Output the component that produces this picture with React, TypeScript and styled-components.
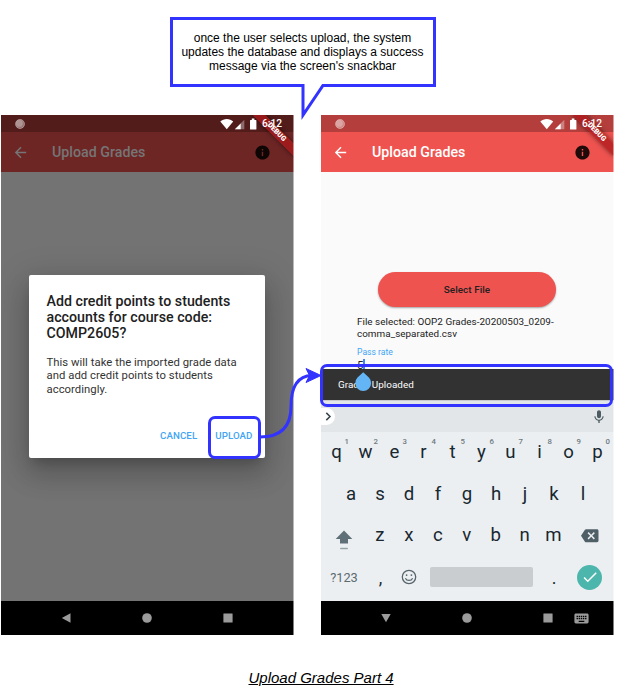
import React from "react";
import styled, { createGlobalStyle, css } from "styled-components";
import {
  MdArrowBack,
  MdBackspace,
  MdCheck,
  MdInfo,
  MdKeyboard,
  MdMic,
} from "react-icons/md";

const BLUE = "#3333ff";
const RED = "#ef5350";

const GlobalStyle = createGlobalStyle`
  *, *::before, *::after { box-sizing: border-box; }
  body { margin: 0; background: #fff; }
  svg { display: block; flex: none; }
`;

const Page = styled.main`
  position: relative;
  display: flex;
  flex-direction: column;
  width: 643px;
  height: 689px;
  padding-top: 17px;
  overflow: hidden;
  background: #fff;
  font-family: Roboto, sans-serif;
`;

const Callout = styled.div`
  position: relative;
  width: 266px;
  height: 70px;
  margin-left: 170px;
  padding: 11px 1px 0 0;
  border: 3px solid ${BLUE};
  background: #fff;
  color: #000;
  font: 12px/14px "Liberation Sans", Arial, sans-serif;
  text-align: center;
  white-space: nowrap;
  z-index: 2;
`;

const CalloutTail = styled.svg`
  position: absolute;
  left: 127px;
  top: 63px;
`;

const Phones = styled.div`
  display: flex;
  gap: 27px;
  margin: 28px 0 0 1px;
`;

const PhoneFrame = styled.section`
  position: relative;
  display: grid;
  grid-template-rows: 17px 40px 1fr 34px;
  width: 293px;
  height: 520px;
  overflow: hidden;

  &::after {
    content: "";
    position: absolute;
    top: 0;
    right: 0;
    width: 1px;
    height: 100%;
    background: rgba(255, 255, 255, 0.5);
    z-index: 5;
  }
`;

const StatusBar = styled.div<{ $dim?: boolean }>`
  display: flex;
  align-items: center;
  padding: 0 12px 0 12.5px;
  background: ${(p) => (p.$dim ? "#521c1b" : "#b33e3c")};
  color: #fff;
`;

const StatusIcons = styled.div`
  display: flex;
  align-items: center;
  margin-left: auto;
  z-index: 3;
`;

const Clock = styled.span`
  width: 20px;
  margin-left: 4px;
  font-size: 10.2px;
  line-height: 18px;
  font-weight: 500;
  white-space: nowrap;
`;

const AppBar = styled.header<{ $dim?: boolean }>`
  display: flex;
  align-items: center;
  padding: 0 23.5px 0 11px;
  background: ${(p) => (p.$dim ? "#6e2625" : RED)};
  color: ${(p) => (p.$dim ? "#757575" : "#fff")};
`;

const AppTitle = styled.h1`
  flex: 1;
  margin: 0 0 0 23px;
  font-size: 14.2px;
  line-height: 20px;
  font-weight: 500;
  letter-spacing: 0.03px;
`;

const InfoMark = styled.span<{ $dim?: boolean }>`
  color: ${(p) => (p.$dim ? "#0e0505" : "#1f0b0a")};
`;

const DebugRibbon = styled.div`
  position: absolute;
  top: 12.8px;
  right: -11.4px;
  width: 57px;
  height: 8.6px;
  background: rgba(172, 24, 26, 0.75);
  box-shadow: 0 0 5px rgba(0, 0, 0, 0.55);
  color: #fff;
  font-size: 7.2px;
  line-height: 8.6px;
  font-weight: 900;
  text-align: center;
  transform: rotate(45deg);
  z-index: 2;
`;

const NavBar = styled.nav`
  display: flex;
  align-items: center;
  padding-left: 60px;
  background: #000;
  color: #9b9b9b;
`;

const NavButton = styled.span<{ $gap: number }>`
  width: 10px;
  margin-right: ${(p) => p.$gap}px;
`;

const DimBody = styled.div`
  padding: 103px 0 0 28px;
  background: #737373;
`;

const Dialog = styled.div`
  width: 236px;
  height: 183px;
  padding: 17.5px 9px 0 17.5px;
  border-radius: 2px;
  background: #fff;
  box-shadow: 0 8px 11px -5px rgba(0, 0, 0, 0.2), 0 17px 27px 2px rgba(0, 0, 0, 0.14),
    0 6px 33px 6px rgba(0, 0, 0, 0.12);
`;

const DialogTitle = styled.h2`
  margin: 0;
  color: #212121;
  font-size: 14.2px;
  line-height: 16.4px;
  font-weight: 500;
  letter-spacing: 0.02px;
  white-space: nowrap;
`;

const DialogText = styled.p`
  margin: 14px 0 0;
  color: #333;
  font-size: 11.3px;
  line-height: 13.6px;
  letter-spacing: 0.035px;
  white-space: nowrap;
`;

const DialogActions = styled.div`
  display: flex;
  justify-content: flex-end;
  gap: 18px;
  margin-top: 33.5px;
  padding-right: 3.5px;
`;

const TextButton = styled.button`
  padding: 0;
  border: 0;
  background: none;
  color: #42a5f5;
  font: 500 9.7px/12px Roboto, sans-serif;
  letter-spacing: 0.08px;
`;

const UploadBody = styled.div`
  display: grid;
  grid-template-rows: 197px 31px 1fr;
  min-height: 0;
  background: #fafafa;
`;

const Form = styled.div`
  padding: 100px 36px 0;
  color: #212121;
`;

const SelectButton = styled.button`
  display: block;
  width: 178px;
  height: 35px;
  margin-left: 21px;
  padding: 0;
  border: 0;
  border-radius: 18px;
  background: ${RED};
  color: #212121;
  font: 500 9.9px/35px Roboto, sans-serif;
  letter-spacing: 0.06px;
  box-shadow: 0 1px 2px rgba(0, 0, 0, 0.35);
`;

const FileName = styled.p`
  margin: 9px 0 0;
  font-size: 9.9px;
  line-height: 11.6px;
  letter-spacing: 0.03px;
  white-space: nowrap;
`;

const FieldLabel = styled.div`
  margin-top: 8px;
  color: #42a5f5;
  font-size: 8.6px;
  line-height: 10px;
`;

const FieldValue = styled.div`
  display: flex;
  align-items: flex-start;
  height: 13px;
  margin-top: 2px;
  font-size: 11.4px;
  line-height: 13px;
`;

const Caret = styled.i`
  width: 1.4px;
  height: 13px;
  background: #4285f4;
`;

const Snackbar = styled.div`
  position: relative;
  padding-left: 17px;
  background: #323232;
  color: #fff;
  font-size: 9.9px;
  line-height: 31px;
  letter-spacing: 0.03px;
`;

const DropHandle = styled.svg`
  position: absolute;
  left: 34px;
  top: 3px;
`;

const Keyboard = styled.div`
  display: grid;
  grid-template-rows: 32px 1fr;
  min-height: 0;
  background: #eceff1;
  color: #182830;
`;

const Suggestions = styled.div`
  display: flex;
  justify-content: space-between;
  align-items: center;
  border-top: 1px solid #c8cacc;
  padding-right: 7px;
  background: #e2e6e8;
  color: #4c5b62;
`;

const Expander = styled.span`
  display: flex;
  align-items: center;
  width: 14px;
  height: 17px;
  padding-left: 4px;
  border-radius: 0 9px 9px 0;
  background: #fff;
  color: #37474f;
`;

const KeyRows = styled.div`
  display: grid;
  grid-template-rows: 41.7px 41.7px 41.7px 43px;
  padding: 0 2px 0 1px;
`;

const KeyRow = styled.div<{ $inset?: number }>`
  display: flex;
  padding: 0 ${(p) => p.$inset ?? 0}px;
`;

const Key = styled.span`
  position: relative;
  display: flex;
  flex: 1 1 0;
  justify-content: center;
  font-size: 18.6px;
  line-height: 41.7px;
`;

const KeyHint = styled.sup`
  position: absolute;
  left: 22.5px;
  top: 4.5px;
  color: #6c7a82;
  font-size: 7.8px;
  line-height: 10px;
  font-weight: 500;
`;

const IconKey = styled.span<{ $width: number; $nudge?: number }>`
  display: flex;
  align-items: center;
  justify-content: center;
  width: ${(p) => p.$width}px;
  padding-top: ${(p) => p.$nudge ?? 0}px;
  color: #4f5f67;
`;

const EmojiKey = styled.span`
  display: flex;
  justify-content: center;
  width: 28px;
  padding-top: 12px;
  color: #56656d;
`;

const ModeKey = styled.span`
  width: 44px;
  color: #5c6a72;
  font-size: 12.8px;
  line-height: 41px;
  text-align: center;
`;

const Punctuation = styled.span`
  width: 29px;
  font-size: 18px;
  line-height: 41px;
  text-align: center;
`;

const SpaceBar = styled.span`
  width: 103px;
  height: 20.5px;
  margin: 9.9px 6.5px 0 7px;
  border-radius: 2px;
  background: #c9cdd0;
`;

const DoneKey = styled.span`
  display: flex;
  align-items: center;
  justify-content: center;
  width: 25px;
  height: 25px;
  margin: 7.9px 0 0 8.5px;
  border-radius: 50%;
  background: #4db6ac;
  color: #fff;
`;

const overlay = css`
  position: absolute;
  pointer-events: none;
  z-index: 6;
`;

const Highlight = styled.div<{ $x: number; $y: number; $w: number; $h: number }>`
  ${overlay}
  left: ${(p) => p.$x}px;
  top: ${(p) => p.$y}px;
  width: ${(p) => p.$w}px;
  height: ${(p) => p.$h}px;
  border: 3px solid ${BLUE};
  border-radius: 7px;
`;

const Connector = styled.svg`
  ${overlay}
  left: 255px;
  top: 360px;
`;

const Caption = styled.p`
  margin: 33px 0 0 248.5px;
  color: #000;
  font: italic 15px/20px "Liberation Sans", Arial, sans-serif;
  text-decoration: underline;
  white-space: nowrap;
`;

function Status({ dim }: { dim?: boolean }) {
  return (
    <StatusBar $dim={dim}>
      <svg width="12" height="12" viewBox="0 0 12 12">
        <circle cx="6" cy="6" r="4.7" fill="#fff" fillOpacity=".38" />
        <circle cx="5.4" cy="5.4" r="3.4" fill="#fff" fillOpacity=".25" />
        <circle cx="6" cy="6" r="4.5" fill="none" stroke="#fff" strokeOpacity=".35" strokeWidth=".8" />
      </svg>
      <StatusIcons>
        <svg width="38" height="12" viewBox="0 0 38 12">
          <path d="M.3 3.6C3.8.2 9.8.2 13.2 3.6L6.8 11.2Z" fill="#fff" />
          <path d="M24.3 1.7V11.2H14.9Z" fill="#fff" fillOpacity=".35" />
          <path d="M20.7 5.4V11.2H14.9Z" fill="#fff" />
          <path d="M31.8.6h2.6V2h1.4a.6.6 0 0 1 .6.6v8.3a.6.6 0 0 1-.6.6h-5.2a.6.6 0 0 1-.6-.6V2.6a.6.6 0 0 1 .6-.6h1.2Z" fill="#fff" />
        </svg>
        <Clock>6:12</Clock>
      </StatusIcons>
    </StatusBar>
  );
}

function Phone({
  dim,
  keyboard,
  children,
}: {
  dim?: boolean;
  keyboard?: boolean;
  children: React.ReactNode;
}) {
  return (
    <PhoneFrame>
      <Status dim={dim} />
      <AppBar $dim={dim}>
        <MdArrowBack size={17} />
        <AppTitle>Upload Grades</AppTitle>
        <InfoMark $dim={dim}>
          <MdInfo size={17} />
        </InfoMark>
      </AppBar>
      {children}
      <NavBar>
        <NavButton $gap={71}>
          <svg width="10" height="10" viewBox="0 0 10 10">
            <path d={keyboard ? "M.3 1h9.4L5 9.3Z" : "M9.5.3v9.4L.8 5Z"} fill="currentColor" />
          </svg>
        </NavButton>
        <NavButton $gap={71}>
          <svg width="10" height="10" viewBox="0 0 10 10">
            <circle cx="5" cy="5" r="4.8" fill="currentColor" />
          </svg>
        </NavButton>
        <NavButton $gap={19.5}>
          <svg width="10" height="10" viewBox="0 0 10 10">
            <rect x=".4" y=".4" width="9.2" height="9.2" rx=".4" fill="currentColor" />
          </svg>
        </NavButton>
        {keyboard && <MdKeyboard size={17} />}
      </NavBar>
      <DebugRibbon>DEBUG</DebugRibbon>
    </PhoneFrame>
  );
}

function SoftKeyboard() {
  return (
    <Keyboard>
      <Suggestions>
        <Expander>
          <svg width="7" height="9" viewBox="0 0 7 9">
            <path d="M1.3.9 5 4.5 1.3 8.1" fill="none" stroke="currentColor" strokeWidth="1.5" />
          </svg>
        </Expander>
        <MdMic size={16} />
      </Suggestions>
      <KeyRows>
        <KeyRow>
          {[..."qwertyuiop"].map((letter, i) => (
            <Key key={letter}>
              {letter}
              <KeyHint>{(i + 1) % 10}</KeyHint>
            </Key>
          ))}
        </KeyRow>
        <KeyRow $inset={14.5}>
          {[..."asdfghjkl"].map((letter) => (
            <Key key={letter}>{letter}</Key>
          ))}
        </KeyRow>
        <KeyRow>
          <IconKey $width={43.5} $nudge={7}>
            <svg width="18" height="20" viewBox="0 0 18 20">
              <path d="M9 .5 17.3 9H13v4.5H5V9H.7Z" fill="#607078" />
              <path d="M5.2 18.5h7.6" stroke="#93a0a6" strokeWidth="1.4" />
            </svg>
          </IconKey>
          {[..."zxcvbnm"].map((letter) => (
            <Key key={letter}>{letter}</Key>
          ))}
          <IconKey $width={44}>
            <MdBackspace size={17.5} />
          </IconKey>
        </KeyRow>
        <KeyRow>
          <ModeKey>?123</ModeKey>
          <Punctuation>,</Punctuation>
          <EmojiKey>
            <svg width="16" height="16" viewBox="0 0 16 16" fill="none" stroke="currentColor">
              <circle cx="8" cy="8" r="6.7" strokeWidth="1.3" />
              <path d="M4.4 9.2c1.2 3 6 3 7.2 0" strokeWidth="1.2" />
              <circle cx="5.6" cy="6.1" r=".9" fill="currentColor" stroke="none" />
              <circle cx="10.4" cy="6.1" r=".9" fill="currentColor" stroke="none" />
            </svg>
          </EmojiKey>
          <SpaceBar />
          <Punctuation>.</Punctuation>
          <DoneKey>
            <MdCheck size={18} />
          </DoneKey>
        </KeyRow>
      </KeyRows>
    </Keyboard>
  );
}

export default function App() {
  return (
    <Page>
      <GlobalStyle />
      <Callout>
        once the user selects upload, the system
        <br />
        updates the database and displays a success
        <br />
        message via the screen's snackbar
        <CalloutTail width="30" height="42" viewBox="0 0 30 42">
          <path d="M3 0V33L23 0Z" fill="#fff" />
          <path d="M1.5 2.5H3V32L23 2.5h2" fill="none" stroke={BLUE} strokeWidth="3" strokeMiterlimit="10" />
        </CalloutTail>
      </Callout>

      <Phones>
        <Phone dim>
          <DimBody>
            <Dialog>
              <DialogTitle>
                Add credit points to students
                <br />
                accounts for course code:
                <br />
                COMP2605?
              </DialogTitle>
              <DialogText>
                This will take the imported grade data
                <br />
                and add credit points to students
                <br />
                accordingly.
              </DialogText>
              <DialogActions>
                <TextButton>CANCEL</TextButton>
                <TextButton>UPLOAD</TextButton>
              </DialogActions>
            </Dialog>
          </DimBody>
        </Phone>

        <Phone keyboard>
          <UploadBody>
            <Form>
              <SelectButton>Select File</SelectButton>
              <FileName>
                File selected: OOP2 Grades-20200503_0209-
                <br />
                comma_separated.csv
              </FileName>
              <FieldLabel>Pass rate</FieldLabel>
              <FieldValue>
                5<Caret />
              </FieldValue>
            </Form>
            <Snackbar>
              Grades Uploaded
              <DropHandle width="17" height="20" viewBox="0 0 17 20">
                <path d="M8.2.2 13.9 5.6A7.9 7.9 0 1 1 2.5 5.6Z" fill="#64b5f6" />
              </DropHandle>
            </Snackbar>
            <SoftKeyboard />
          </UploadBody>
        </Phone>
      </Phones>

      <Caption>Upload Grades Part 4</Caption>

      <Highlight $x={208} $y={416} $w={53} $h={43} />
      <Highlight $x={320} $y={364} $w={293} $h={43} />
      <Connector width="68" height="82" viewBox="0 0 68 82">
        <path d="M5 77Q36 77 36 46.5Q36 16 57 15.5" fill="none" stroke={BLUE} strokeWidth="3" />
        <path d="M66 15.5 51 22.5 54.5 15.5 51 8.5Z" fill={BLUE} stroke={BLUE} strokeWidth="1" />
      </Connector>
    </Page>
  );
}
